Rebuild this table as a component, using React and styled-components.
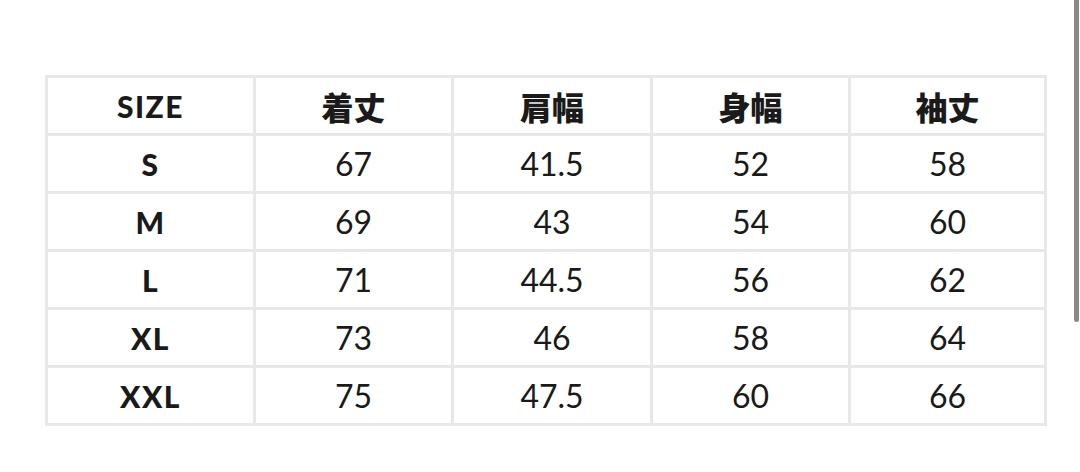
import React from "react";
import styled, { createGlobalStyle } from "styled-components";

const headers = ["SIZE", "着丈", "肩幅", "身幅", "袖丈"];

const rows = [
  ["S", "67", "41.5", "52", "58"],
  ["M", "69", "43", "54", "60"],
  ["L", "71", "44.5", "56", "62"],
  ["XL", "73", "46", "58", "64"],
  ["XXL", "75", "47.5", "60", "66"],
];

const App = () => {
  return (
    <Page>
      <GlobalStyle />
      <SizeTable>
        {headers.map((label, i) => (
          <Cell key={label} $head $latin={i === 0}>
            {label}
          </Cell>
        ))}
        {rows.map((row) =>
          row.map((value, i) => (
            <Cell key={row[0] + i} $head={i === 0} $latin>
              {value}
            </Cell>
          ))
        )}
      </SizeTable>
      <Scrollbar />
    </Page>
  );
};

const GlobalStyle = createGlobalStyle`
  html, body {
    margin: 0;
    padding: 0;
    background: #fff;
  }
  body {
    font-family: "Lato", "Noto Sans CJK JP", sans-serif;
    color: #111;
  }
`;

const Page = styled.div`
  position: relative;
  width: 1080px;
  height: 472px;
  padding: 75px 0 0 45px;
  box-sizing: border-box;
  overflow: hidden;
`;

const SizeTable = styled.div`
  display: grid;
  grid-template-columns: 205px 195px 196px 195px 193px;
  grid-auto-rows: 55px;
  gap: 3px;
  padding: 3px;
  width: max-content;
  background: #e8e8e8;
`;

const Cell = styled.div`
  display: flex;
  align-items: center;
  justify-content: center;
  background: #fff;
  font-family: ${(p) =>
    p.$latin
      ? `"Lato", "Noto Sans CJK JP", sans-serif`
      : `"Noto Sans CJK JP", sans-serif`};
  font-size: ${(p) => (p.$head ? (p.$latin ? "30px" : "32px") : "32px")};
  font-weight: ${(p) => (p.$head ? 900 : 400)};
  letter-spacing: ${(p) => (p.$head && p.$latin ? "1.5px" : "0")};
  color: #1a1a1a;
`;

const Scrollbar = styled.div`
  position: absolute;
  top: 0;
  right: 1px;
  width: 5px;
  height: 322px;
  background: #8a8a8a;
  border-radius: 0 0 3px 3px;
`;

export default App;
